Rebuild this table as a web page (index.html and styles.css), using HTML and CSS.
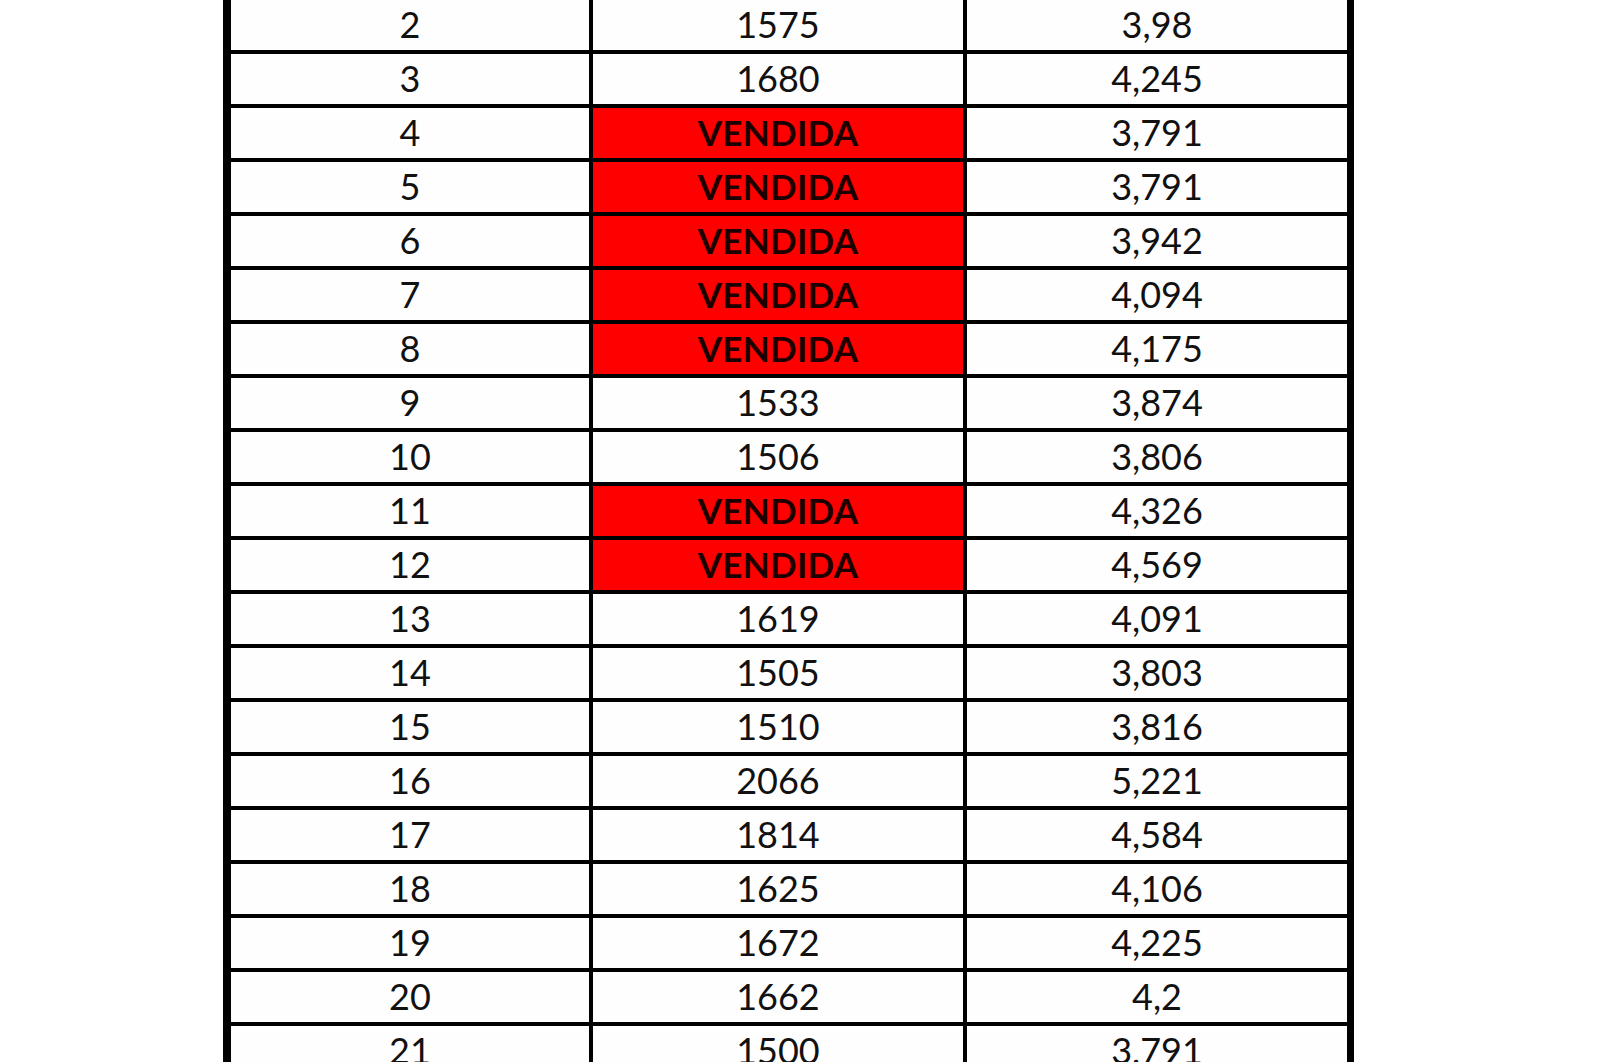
FILE: index.html
```html
<!DOCTYPE html>
<html lang="es">
<head>
<meta charset="utf-8">
<title>Tabla</title>
<link rel="stylesheet" href="styles.css">
</head>
<body>
<div class="sheet">
  <div class="cell">2</div><div class="cell">1575</div><div class="cell">3,98</div>
  <div class="cell">3</div><div class="cell">1680</div><div class="cell">4,245</div>
  <div class="cell">4</div><div class="cell sold">VENDIDA</div><div class="cell">3,791</div>
  <div class="cell">5</div><div class="cell sold">VENDIDA</div><div class="cell">3,791</div>
  <div class="cell">6</div><div class="cell sold">VENDIDA</div><div class="cell">3,942</div>
  <div class="cell">7</div><div class="cell sold">VENDIDA</div><div class="cell">4,094</div>
  <div class="cell">8</div><div class="cell sold">VENDIDA</div><div class="cell">4,175</div>
  <div class="cell">9</div><div class="cell">1533</div><div class="cell">3,874</div>
  <div class="cell">10</div><div class="cell">1506</div><div class="cell">3,806</div>
  <div class="cell">11</div><div class="cell sold">VENDIDA</div><div class="cell">4,326</div>
  <div class="cell">12</div><div class="cell sold">VENDIDA</div><div class="cell">4,569</div>
  <div class="cell">13</div><div class="cell">1619</div><div class="cell">4,091</div>
  <div class="cell">14</div><div class="cell">1505</div><div class="cell">3,803</div>
  <div class="cell">15</div><div class="cell">1510</div><div class="cell">3,816</div>
  <div class="cell">16</div><div class="cell">2066</div><div class="cell">5,221</div>
  <div class="cell">17</div><div class="cell">1814</div><div class="cell">4,584</div>
  <div class="cell">18</div><div class="cell">1625</div><div class="cell">4,106</div>
  <div class="cell">19</div><div class="cell">1672</div><div class="cell">4,225</div>
  <div class="cell">20</div><div class="cell">1662</div><div class="cell">4,2</div>
  <div class="cell">21</div><div class="cell">1500</div><div class="cell">3,791</div>
</div>
</body>
</html>
```
FILE: styles.css
```css
html, body {
  margin: 0;
  padding: 0;
  background: #ffffff;
  overflow: hidden;
  height: 1062px;
}
.sheet {
  margin-left: 223px;
  width: 1131px;
  box-sizing: border-box;
  display: grid;
  grid-template-columns: 358px 370px 380px;
  grid-auto-rows: 50px;
  column-gap: 4px;
  row-gap: 4px;
  background: #000;
  border-left: 8px solid #000;
  border-right: 7px solid #000;
}
.cell {
  background: #fefefe;
  display: flex;
  align-items: center;
  justify-content: center;
  padding-bottom: 2px;
  box-sizing: border-box;
  font-family: Lato, "Open Sans", sans-serif;
  font-size: 36px;
  color: #111;
  line-height: 1;
}
.sold {
  background: #fe0000;
  color: #1c0000;
  font-weight: 700;
  font-size: 35px;
  letter-spacing: 0.3px;
}
```
